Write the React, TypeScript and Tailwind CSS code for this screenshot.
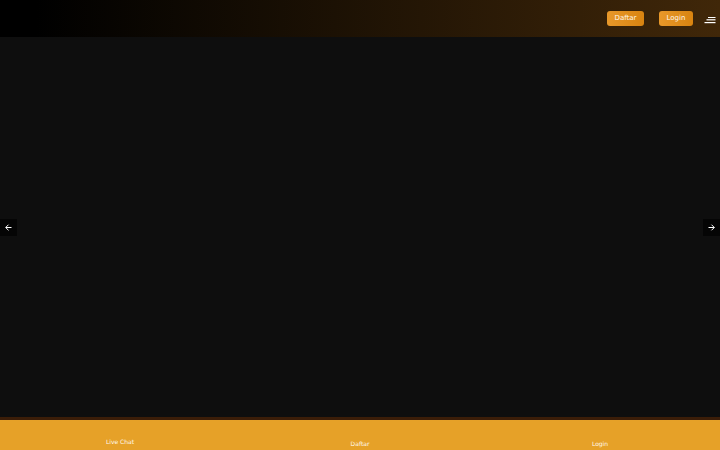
import React from "react";

const footerLinks = [
  { label: "Live Chat", lift: "pb-[3px]" },
  { label: "Daftar", lift: "pb-px" },
  { label: "Login", lift: "pb-px" },
];

function Arrow({ flip = false }: { flip?: boolean }) {
  return (
    <svg
      viewBox="0 0 9 9"
      className={flip ? "size-[9px] rotate-180" : "size-[9px]"}
      fill="none"
      stroke="currentColor"
      strokeWidth="1"
      aria-hidden="true"
    >
      <path d="M7.5 4.5H1.8M4.5 1.7L1.7 4.5L4.5 7.3" />
    </svg>
  );
}

export default function App() {
  const pill =
    "flex h-[15px] items-center justify-center rounded-[3px] bg-linear-to-r/srgb from-[#e8982a] to-[#d98410] text-[7px] leading-none text-[#fff8ea]";
  return (
    <div className="flex h-screen flex-col bg-[#0e0e0e] font-['DejaVu_Sans',sans-serif]">
      <header className="flex h-[37px] shrink-0 items-center justify-end bg-linear-to-r/srgb from-black from-5% to-[#402709] pr-1">
        <div className="flex gap-[15px]">
          <button type="button" className={`${pill} w-[37px]`}>Daftar</button>
          <button type="button" className={`${pill} w-[34px]`}>Login</button>
        </div>
        <button type="button" aria-label="Menu" className="ml-[11px] pt-[3px] text-white">
          <svg viewBox="0 0 12 8" className="h-2 w-3" fill="currentColor" aria-hidden="true">
            <rect x="4" y="1" width="7.5" height="1" />
            <rect x="2.5" y="3.2" width="9" height="1.2" />
            <rect x="0.5" y="6" width="11" height="1.2" />
          </svg>
        </button>
      </header>

      <main className="flex flex-1 items-center justify-between">
        <button type="button" aria-label="Previous slide" className="flex size-[17px] items-center justify-center bg-[#050505] text-white">
          <Arrow />
        </button>
        <button type="button" aria-label="Next slide" className="flex size-[17px] items-center justify-center bg-[#050505] text-white">
          <Arrow flip />
        </button>
      </main>

      <nav className="grid h-[33px] shrink-0 grid-cols-3 border-t-3 border-[#3b1d08] bg-[#e6a128]">
        {footerLinks.map(({ label, lift }) => (
          <a
            key={label}
            href="#"
            className={`flex items-end justify-center text-[6px] leading-[10px] text-[#fff8ea] ${lift}`}
          >
            {label}
          </a>
        ))}
      </nav>
    </div>
  );
}
